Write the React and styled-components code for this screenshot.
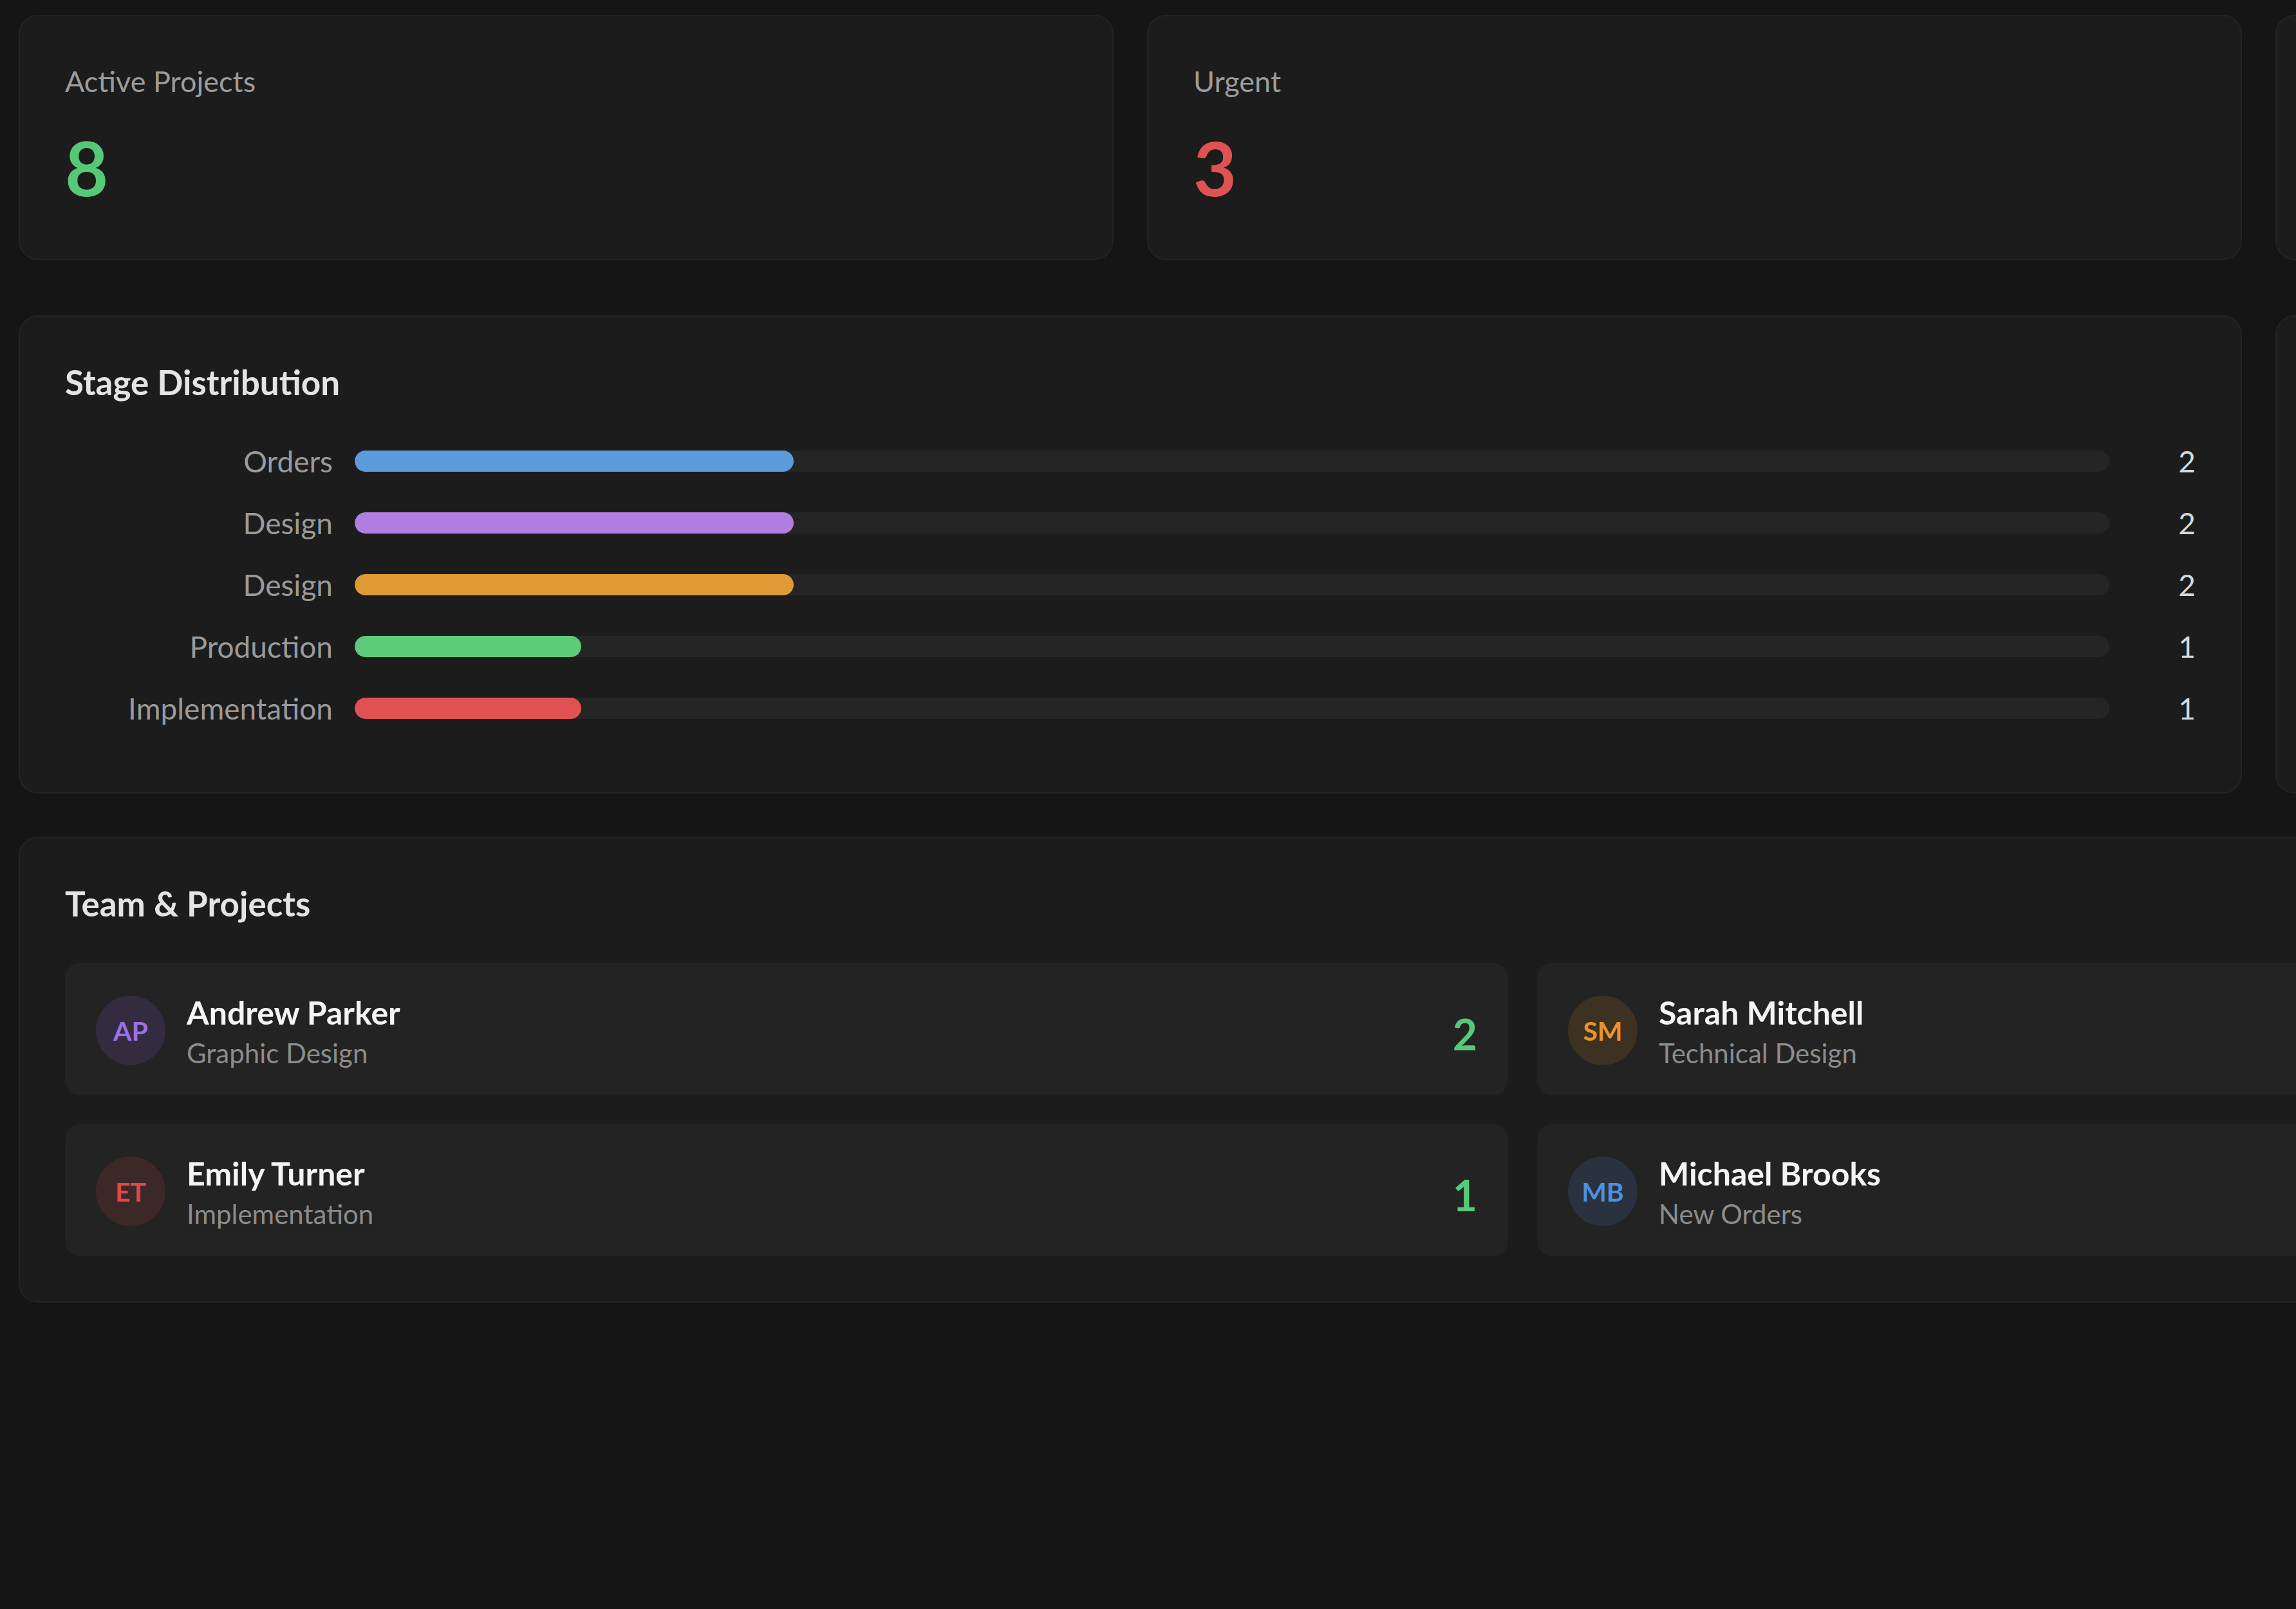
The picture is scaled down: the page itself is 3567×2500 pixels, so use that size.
import React from "react";
import styled, { createGlobalStyle } from "styled-components";

const GlobalStyle = createGlobalStyle`
  html, body {
    margin: 0;
    padding: 0;
    background: #151515;
    overflow: hidden;
  }
  body {
    font-family: Lato, "Open Sans", "Liberation Sans", sans-serif;
    color: #e6e6e6;
  }
  * { box-sizing: border-box; }
`;

const Page = styled.div`
  width: 7018px;
  padding: 23px 29px 80px;
  display: flex;
  flex-direction: column;
`;

const Grid = styled.div`
  display: grid;
  grid-template-columns: repeat(4, 1701px);
  column-gap: 52px;
  margin-bottom: ${(p) => p.$after}px;
`;

const Card = styled.section`
  grid-column: span ${(p) => p.$span || 1};
  background: #1c1c1c;
  border: 2px solid #242424;
  border-radius: 30px;
  padding: 70px;
`;

const StatCard = styled(Card)`
  padding: 73px 70px 72px;
`;

const StatLabel = styled.div`
  font-size: 45px;
  line-height: 56px;
  color: #9c9c9c;
`;

const StatValue = styled.div`
  margin-top: 37px;
  font-size: 116px;
  line-height: 1.2;
  font-weight: 700;
  color: ${(p) => p.$color};
`;

const CardTitle = styled.h2`
  margin: 0 0 61px;
  font-size: 53px;
  line-height: 1.2;
  font-weight: 700;
  color: #e4e4e4;
`;

const StageList = styled.div`
  display: flex;
  flex-direction: column;
  gap: 36px;
  margin-bottom: 30px;
`;

const StageRow = styled.div`
  display: flex;
  align-items: center;
  height: 60px;
  gap: 34px;
`;

const StageLabel = styled.div`
  width: 416px;
  flex-shrink: 0;
  text-align: right;
  font-size: 46px;
  color: #9a9a9a;
  white-space: nowrap;
`;

const Track = styled.div`
  flex: 1;
  height: 33px;
  border-radius: 17px;
  background: #252525;
  overflow: hidden;
`;

const Fill = styled.div`
  height: 100%;
  border-radius: 17px;
  background: ${(p) => p.$color};
`;

const StageCount = styled.div`
  width: 100px;
  flex-shrink: 0;
  text-align: right;
  font-size: 46px;
  color: #d8d8d8;
`;

const MemberGrid = styled.div`
  display: grid;
  grid-template-columns: repeat(3, 1fr);
  column-gap: 45px;
  row-gap: 44px;
`;

const Member = styled.div`
  display: flex;
  align-items: center;
  height: 206px;
  padding: 4px 48px 0;
  background: #232323;
  border-radius: 24px;
`;

const Avatar = styled.div`
  width: 108px;
  height: 108px;
  flex-shrink: 0;
  border-radius: 50%;
  display: flex;
  align-items: center;
  justify-content: center;
  background: ${(p) => p.$bg};
  color: ${(p) => p.$fg};
  font-size: 41px;
  font-weight: 700;
`;

const MemberInfo = styled.div`
  margin-left: 33px;
  padding-top: 2px;
  display: flex;
  flex-direction: column;
  gap: 8px;
`;

const MemberName = styled.div`
  font-size: 50px;
  line-height: 1.2;
  font-weight: 700;
  color: #f4f4f4;
`;

const MemberRole = styled.div`
  font-size: 42px;
  line-height: 1.2;
  color: #8c8c8c;
`;

const MemberCount = styled.div`
  margin-left: auto;
  padding-top: 10px;
  font-size: 66px;
  font-weight: 700;
  color: #56c978;
`;

const stats = [
  { label: "Active Projects", value: 8, color: "#56c978" },
  { label: "Urgent", value: 3, color: "#e05252" },
  { label: "In Review", value: 2, color: "#e09a35" },
  { label: "Completed", value: 5, color: "#5b9bdb" },
];

const stages = [
  { label: "Orders", value: 2, color: "#5b9bdb" },
  { label: "Design", value: 2, color: "#b07fe0" },
  { label: "Design", value: 2, color: "#e09a35" },
  { label: "Production", value: 1, color: "#5ccb7a" },
  { label: "Implementation", value: 1, color: "#e05252" },
];

const total = 8;
/* small bars keep a minimum visible length */
const barWidth = (v) => `max(${(v / total) * 100}%, 352px)`;

const members = [
  { initials: "AP", name: "Andrew Parker", role: "Graphic Design", count: 2, bg: "#332b3e", fg: "#9d70e6" },
  { initials: "SM", name: "Sarah Mitchell", role: "Technical Design", count: 2, bg: "#3d3122", fg: "#e8952e" },
  { initials: "DW", name: "Daniel Wright", role: "Production", count: 1, bg: "#243628", fg: "#56c978" },
  { initials: "ET", name: "Emily Turner", role: "Implementation", count: 1, bg: "#3d2828", fg: "#e04848" },
  { initials: "MB", name: "Michael Brooks", role: "New Orders", count: 2, bg: "#29323e", fg: "#4d8fe0" },
  { initials: "LH", name: "Laura Hayes", role: "Graphic Design", count: 0, bg: "#332b3e", fg: "#9d70e6" },
];

export default function App() {
  return (
    <>
      <GlobalStyle />
      <Page>
        <Grid $after={86}>
          {stats.map((s) => (
            <StatCard key={s.label}>
              <StatLabel>{s.label}</StatLabel>
              <StatValue $color={s.color}>{s.value}</StatValue>
            </StatCard>
          ))}
        </Grid>

        <Grid $after={67}>
          <Card $span={2}>
            <CardTitle>Stage Distribution</CardTitle>
            <StageList>
              {stages.map((s, i) => (
                <StageRow key={i}>
                  <StageLabel>{s.label}</StageLabel>
                  <Track>
                    <Fill $color={s.color} style={{ width: barWidth(s.value) }} />
                  </Track>
                  <StageCount>{s.value}</StageCount>
                </StageRow>
              ))}
            </StageList>
          </Card>
          <Card $span={2}>
            <CardTitle>Upcoming Deadlines</CardTitle>
          </Card>
        </Grid>

        <Grid $after={0}>
          <Card $span={4}>
            <CardTitle>Team &amp; Projects</CardTitle>
            <MemberGrid>
              {members.map((m) => (
                <Member key={m.initials}>
                  <Avatar $bg={m.bg} $fg={m.fg}>{m.initials}</Avatar>
                  <MemberInfo>
                    <MemberName>{m.name}</MemberName>
                    <MemberRole>{m.role}</MemberRole>
                  </MemberInfo>
                  <MemberCount>{m.count}</MemberCount>
                </Member>
              ))}
            </MemberGrid>
          </Card>
        </Grid>
      </Page>
    </>
  );
}
